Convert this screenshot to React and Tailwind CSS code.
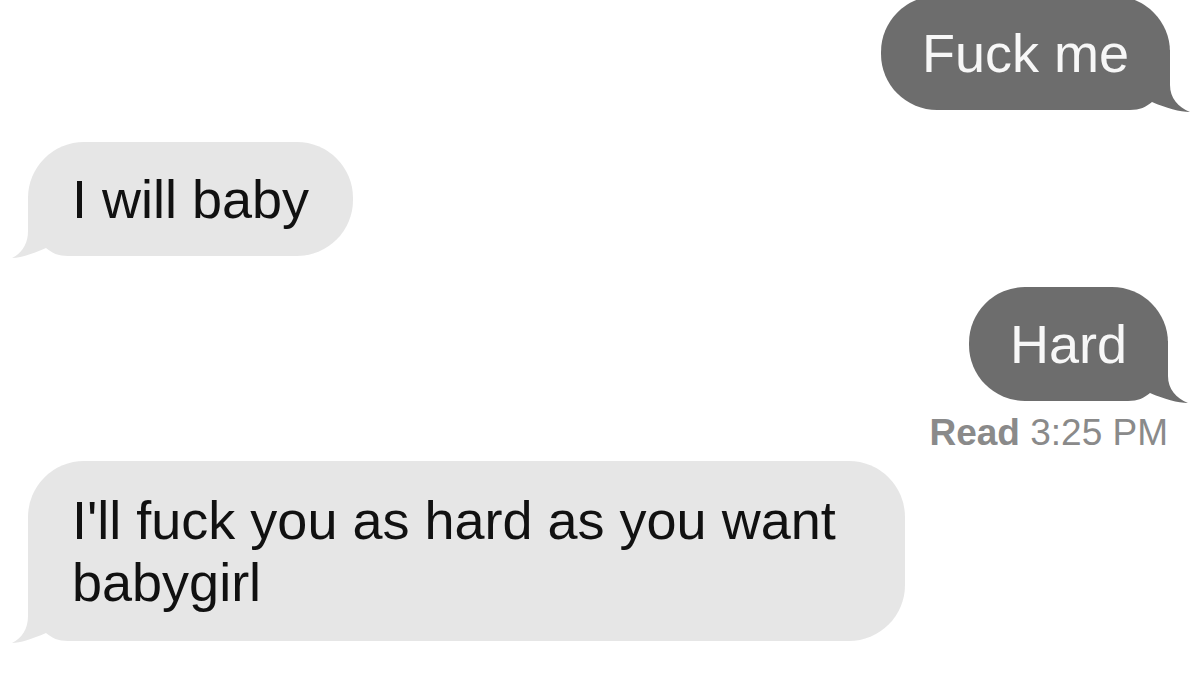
const FONT = { fontFamily: '"Liberation Sans", Arial, sans-serif' }

function TailRight({ color }) {
  return (
    <svg className="absolute bottom-[-4px] right-[-22px]" width="82" height="64" viewBox="0 0 82 64">
      <path d="M0 0 L60 0 L60 35 C60 48 68 57 80 62 C70 62 56 58 42 52 C36 57 30 60 20 60 L0 60 Z" fill={color} />
    </svg>
  )
}

function TailLeft({ color }) {
  return (
    <svg className="absolute bottom-[-4px] left-[-22px]" width="82" height="64" viewBox="0 0 82 64">
      <path d="M82 0 L22 0 L22 35 C22 48 16 57 6 62 C14 62 26 58 40 52 C46 57 52 60 62 60 L82 60 Z" fill={color} />
    </svg>
  )
}

function Outgoing({ text }) {
  return (
    <div className="relative rounded-[56px] bg-[#6d6d6d] px-[41px] py-[26px] text-[54px] leading-[62px] text-[#f7f7f7]">
      <span className="relative z-10">{text}</span>
      <TailRight color="#6d6d6d" />
    </div>
  )
}

function Incoming({ children, className = '' }) {
  return (
    <div className={`relative rounded-[56px] bg-[#e6e6e6] px-[44px] text-[54px] leading-[62px] text-[#111] ${className}`}>
      <span className="relative z-10">{children}</span>
      <TailLeft color="#e6e6e6" />
    </div>
  )
}

export default function App() {
  return (
    <div className="h-[675px] w-[1200px] overflow-hidden bg-white" style={FONT}>
      <div className="flex flex-col">
        <div className="mt-[-4px] flex justify-end pr-[30px]">
          <Outgoing text="Fuck me" />
        </div>

        <div className="mt-[32px] flex pl-[28px]">
          <Incoming className="py-[26px]">I will baby</Incoming>
        </div>

        <div className="mt-[31px] flex justify-end pr-[32px]">
          <Outgoing text="Hard" />
        </div>

        <div className="mt-[10px] flex justify-end pr-[32px] text-[37px] leading-[44px] text-[#8a8a8a]">
          <span><span className="font-bold">Read</span> 3:25 PM</span>
        </div>

        <div className="mt-[6px] flex pl-[28px]">
          <Incoming className="w-[877px] py-[28px] text-[54.5px]">I'll fuck you as hard as you want babygirl</Incoming>
        </div>
      </div>
    </div>
  )
}
